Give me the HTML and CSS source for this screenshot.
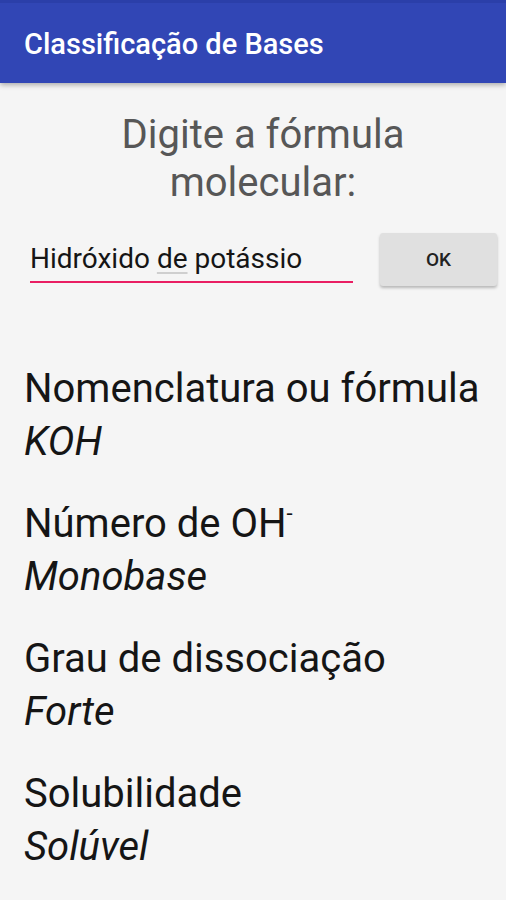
FILE: index.html
```html
<!DOCTYPE html>
<html lang="pt">
  <head>
    <meta charset="UTF-8" />
    <meta name="viewport" content="width=device-width, initial-scale=1.0" />
    <title>Classificação de Bases</title>
    <link rel="stylesheet" href="styles.css">
  </head>
  <body>
    <div class="app-bar">
      <h1>Classificação de Bases</h1>
    </div>

    <div class="content">
      <p class="prompt">Digite a fórmula molecular:</p>

      <div class="search-row">
        <div class="field">
          <span class="field-text">Hidróxido <u>de</u> potássio</span>
        </div>
        <button class="ok-button">OK</button>
      </div>

      <div class="results">
        <div class="result">
          <p class="label">Nomenclatura ou fórmula</p>
          <p class="value">KOH</p>
        </div>
        <div class="result">
          <p class="label">Número de OH<sup>-</sup></p>
          <p class="value">Monobase</p>
        </div>
        <div class="result">
          <p class="label">Grau de dissociação</p>
          <p class="value">Forte</p>
        </div>
        <div class="result">
          <p class="label">Solubilidade</p>
          <p class="value">Solúvel</p>
        </div>
      </div>
    </div>
  </body>
</html>
```

FILE: styles.css
```css
body {
  margin: 0;
  font-family: Roboto, "Noto Sans", sans-serif;
  background-color: #f5f5f5;
  width: 506px;
  height: 900px;
  overflow: hidden;
}

/* Barra superior */
.app-bar {
  background-color: #3146b5;
  height: 83px;
  padding: 24px 24px 0;
  border-top: 3px solid #2b3fa9;
  box-shadow: 0 2px 5px rgba(0, 0, 0, 0.3);
  box-sizing: border-box;
}

.app-bar h1 {
  margin: 0;
  color: #ffffff;
  font-size: 29px;
  line-height: 34px;
  font-weight: 500;
}

.content {
  padding: 0 4px 0 24px;
}

.prompt {
  margin: 28px auto 0;
  max-width: 420px;
  text-align: center;
  font-size: 40px;
  line-height: 48px;
  color: #575757;
}

.search-row {
  display: flex;
  align-items: flex-start;
  margin-top: 26px;
}

.field {
  width: 323px;
  margin-left: 6px;
  border-bottom: 2px solid #e91e63;
  padding: 9px 0 5px;
}

.field-text {
  font-size: 28px;
  line-height: 34px;
  color: #151515;
}

.field-text u {
  text-decoration-color: #cfcfcf;
  text-underline-offset: 4px;
}

.ok-button {
  margin-left: 27px;
  width: 117px;
  height: 53px;
  border: none;
  border-radius: 3px;
  background-color: #e0e0e0;
  box-shadow: 0 2px 3px rgba(0, 0, 0, 0.25);
  font-family: Roboto, sans-serif;
  font-size: 19px;
  font-weight: 500;
  color: #222222;
}

.results {
  margin-top: 76px;
}

.result {
  margin-bottom: 29px;
}

.label,
.value {
  margin: 0;
  font-size: 40px;
  line-height: 53px;
  color: #151515;
}

.value {
  font-style: italic;
}

.label sup {
  font-size: 22px;
  vertical-align: 16px;
  line-height: 0;
}
```
